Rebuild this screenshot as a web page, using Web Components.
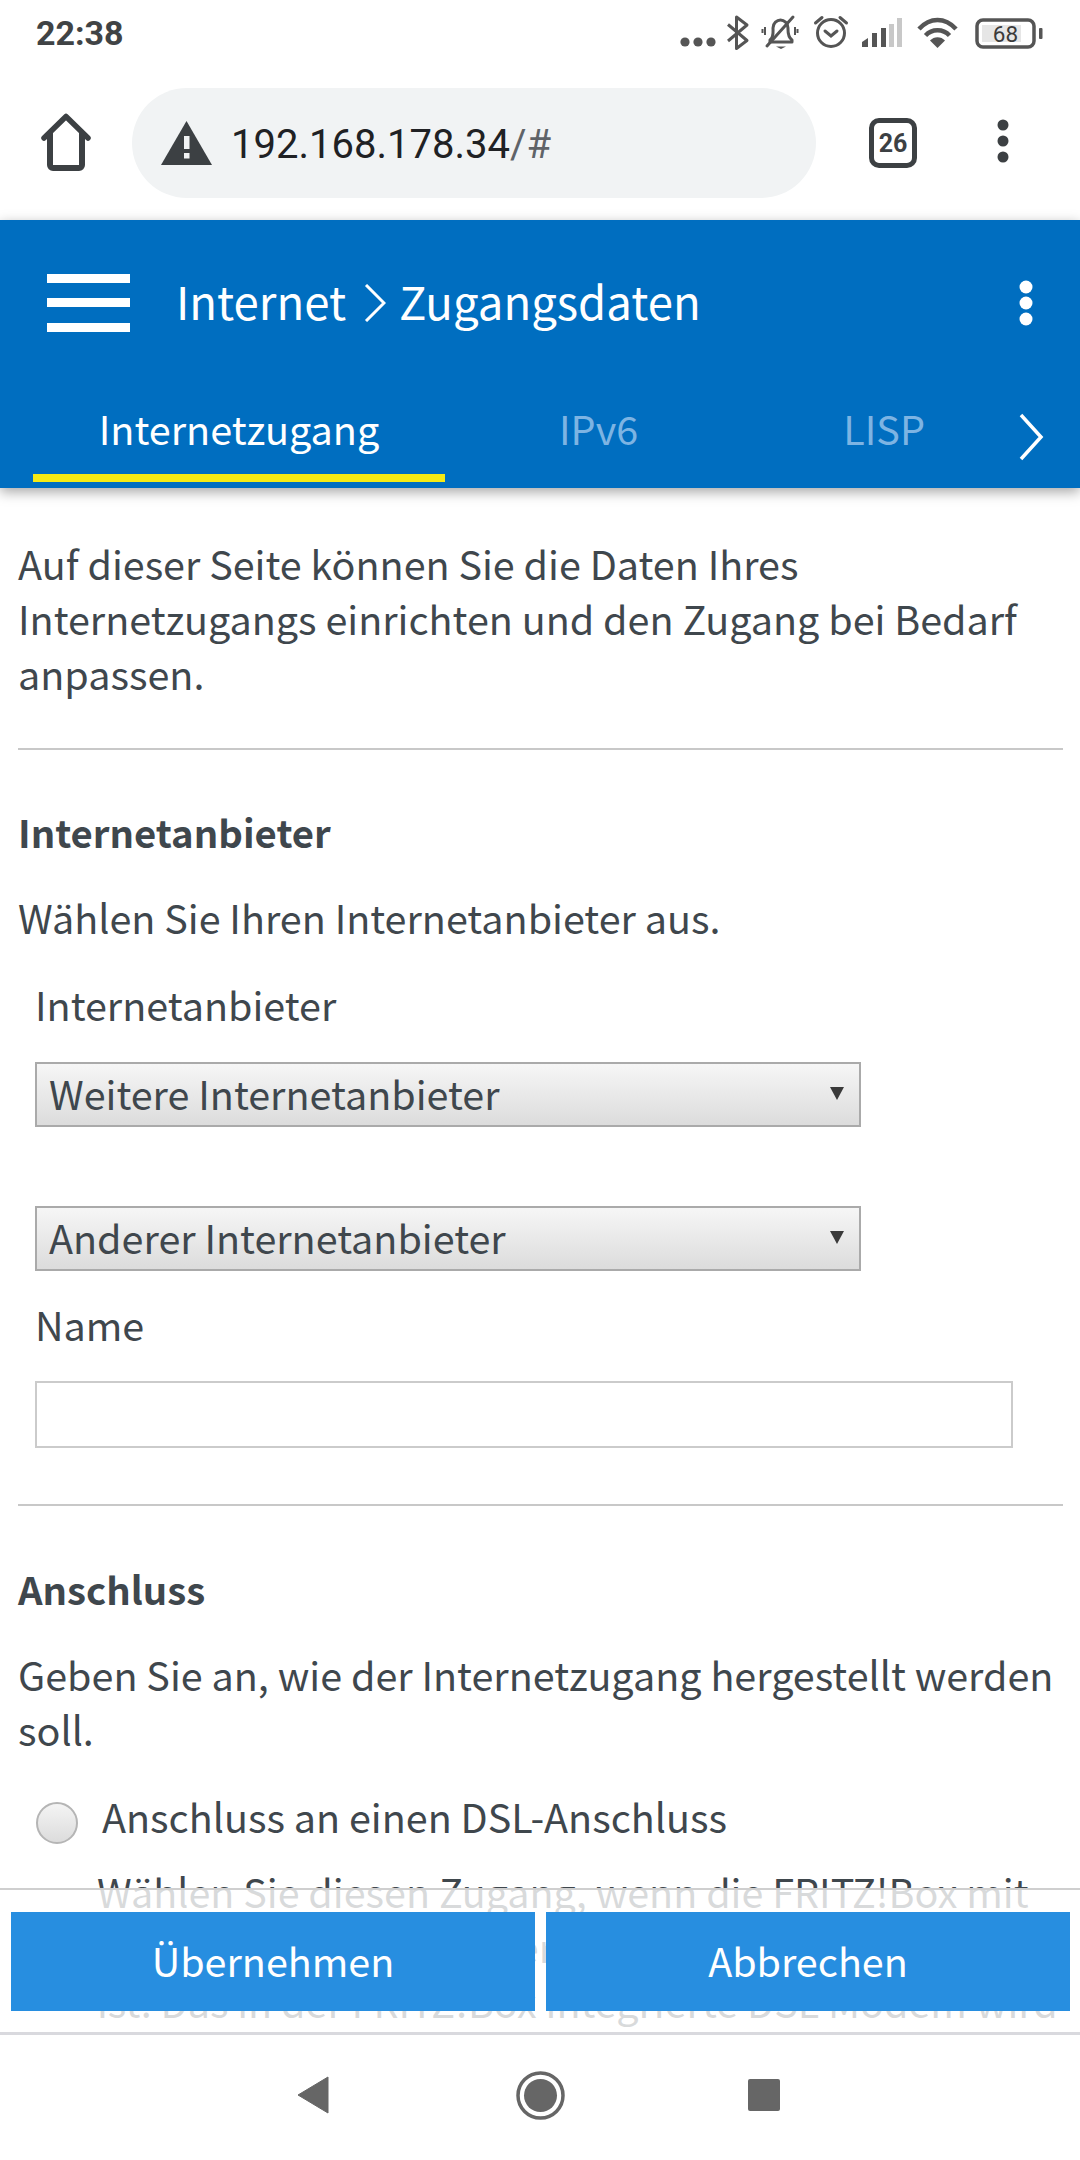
<!DOCTYPE html>
<html lang="de"><head><meta charset="utf-8"><title>Internet</title>
<style>
html,body{margin:0;padding:0;background:#fff}
body{width:1080px;height:2160px;overflow:hidden;font-family:"Noto Sans CJK SC","Noto Sans CJK JP","Open Sans",sans-serif;color:#3f474d}
</style></head><body>
<phone-app>
<status-bar slot="status"></status-bar>
<browser-bar slot="browser" url="192.168.178.34" rest="/#" tabs="26"></browser-bar>
<app-header slot="header" area="Internet" page="Zugangsdaten">
  <header-tab active>Internetzugang</header-tab>
  <header-tab class="b">IPv6</header-tab>
  <header-tab class="c">LISP</header-tab>
</app-header>
<page-body slot="main">
  <page-text>Auf dieser Seite können Sie die Daten Ihres Internetzugangs einrichten und den Zugang bei Bedarf anpassen.</page-text>
  <page-section heading="Internetanbieter" style="--gap:48px;--head:54px">
    <page-text>Wählen Sie Ihren Internetanbieter aus.</page-text>
    <field-label>Internetanbieter</field-label>
    <fake-select>Weitere Internetanbieter</fake-select>
    <fake-select second>Anderer Internetanbieter</fake-select>
    <field-label name>Name</field-label>
    <fake-input></fake-input>
  </page-section>
  <page-section heading="Anschluss" style="--gap:56px;--head:55px">
    <page-text>Geben Sie an, wie der Internetzugang hergestellt werden soll.</page-text>
    <radio-option>Anschluss an einen DSL-Anschluss</radio-option>
    <option-hint>Wählen Sie diesen Zugang, wenn die FRITZ!Box mit<br>einem DSL-Anschluss verbunden<br>ist. Das in der FRITZ!Box integrierte DSL Modem wird</option-hint>
  </page-section>
</page-body>
<action-bar slot="actions"><action-button>Übernehmen</action-button><action-button>Abbrechen</action-button></action-bar>
<nav-bar slot="nav"></nav-bar>
</phone-app>
<script>
function def(name, css, html){
  customElements.define(name, class extends HTMLElement{
    connectedCallback(){
      if(this.shadowRoot) return;
      const r=this.attachShadow({mode:'open'});
      const h=typeof html==='function'?html(this):html;
      r.innerHTML='<style>'+css+'</style>'+h;
    }
  });
}
def('phone-app',`:host{display:flex;flex-direction:column;width:1080px;height:2160px;position:relative;overflow:hidden;background:#fff}
.main{flex:1;min-height:0;position:relative;overflow:hidden}
.top{position:relative;z-index:2}`,
`<slot name="status"></slot><slot name="browser"></slot><div class="top"><slot name="header"></slot></div>
<div class="main"><slot name="main"></slot><slot name="actions"></slot></div><slot name="nav"></slot>`);

def('status-bar',`:host{display:flex;align-items:center;height:66px;padding:0 36px;box-sizing:border-box;position:relative}
.t{font:700 34px/66px Roboto,sans-serif;color:#404345;margin-top:-1px}
svg{position:absolute;left:0;top:0}
.b{position:absolute;left:976px;width:59px;top:21px;text-align:center;font:400 22.5px/27px Roboto,sans-serif;color:#3a3a3a}`,
`<span class="t">22:38</span>
<svg width="1080" height="66" viewBox="0 0 1080 66" aria-hidden="true">
<g fill="#555"><circle cx="685" cy="42" r="4.6"/><circle cx="698" cy="42" r="4.6"/><circle cx="711" cy="42" r="4.6"/></g>
<path d="M728 24.500 L747 40.500 L736.500 48.500 V17 L747 25 L728 41" fill="none" stroke="#555" stroke-width="3" stroke-linejoin="round"/>
<g fill="none" stroke="#555" stroke-width="3">
<path d="M770 40 c4-3 3-8 3-12 c0-5 4-8 7.500-8 c3.500 0 7.500 3 7.500 8 c0 4-.5 9 4 12 v2 h-22 z" stroke-linejoin="round"/>
<path d="M767 46 L793 17" stroke-linecap="round"/>
<path d="M765 27 v8 M762.500 29 v4 M795 27 v8 M797.500 29 v4" stroke-width="2"/>
</g>
<path d="M776 46.500 h10 l-5 2.500z" fill="#555"/>
<g fill="none" stroke="#555" stroke-width="3" stroke-linecap="round">
<circle cx="831" cy="33" r="13.500"/><path d="M825 31 l6 5 l6-5"/><path d="M815.500 23 L822 17.500 M840 17.500 L846.500 23"/>
</g>
<g fill="#555"><path d="M862 42 l6-4 v9 h-6z"/><rect x="872" y="33" width="5" height="14"/><rect x="881" y="28" width="5" height="19"/></g>
<g fill="#c8c8c8"><rect x="889" y="24" width="5" height="23"/><rect x="897" y="18" width="5" height="29"/></g>
<g fill="none" stroke="#555" stroke-width="4.500">
<path d="M919 29 C930 17 945 17 956 29"/><path d="M925.500 35.500 C932 28.500 943 28.500 949.500 35.500"/></g>
<path d="M930 40.500 C934 36 941 36 945 40.500 L937.500 48z" fill="#555"/>
<rect x="977" y="20" width="57" height="27" rx="6" fill="none" stroke="#555" stroke-width="3.500"/>
<rect x="982" y="25" width="39" height="17" fill="#e6e6e6"/>
<rect x="1039" y="28" width="3.500" height="11" rx="1" fill="#555"/>
</svg><span class="b">68</span>`);

def('browser-bar',`:host{display:flex;align-items:center;height:154px;box-sizing:border-box}
.home{width:132px;height:60px;flex:none;display:flex}
.pill{flex:none;width:684px;height:110px;border-radius:55px;background:#f1f3f4;display:flex;align-items:center;box-sizing:border-box;padding-left:29px}
.url{font:400 40px/1 Roboto,sans-serif;color:#202124;margin:3px 0 0 19px}
.url span{color:#5f6368}
.tab{width:48px;height:50px;box-sizing:border-box;border:5px solid #3c4043;border-radius:10px;display:flex;align-items:center;justify-content:center;font:700 25px/1 Roboto,sans-serif;color:#3c4043}
svg{display:block}`,
h=>`<div class="home"><svg width="132" height="60" viewBox="0 0 132 60" aria-hidden="true"><path d="M44 25 L66 3.500 L88 25" fill="none" stroke="#3c4043" stroke-width="5.500" stroke-linecap="round" stroke-linejoin="round"/><path d="M50 20 V52 a3 3 0 0 0 3 3 H79 a3 3 0 0 0 3-3 V20" fill="none" stroke="#3c4043" stroke-width="6"/></svg></div>
<div class="pill"><svg width="51" height="44" viewBox="0 0 51 44" aria-hidden="true"><path d="M25.500 0 L51 44 H0z" fill="#3c4043"/><rect x="23" y="15" width="5.500" height="13" fill="#f1f3f4"/><rect x="23" y="32" width="5.500" height="5.500" fill="#f1f3f4"/></svg>
<div class="url">${h.getAttribute('url')}<span>${h.getAttribute('rest')}</span></div></div>
<div class="tab" style="margin-left:53px">${h.getAttribute('tabs')}</div>
<svg style="margin-left:70px" width="32" height="50" viewBox="0 0 32 50" aria-hidden="true"><g fill="#3c4043"><circle cx="16" cy="7" r="5.500"/><circle cx="16" cy="23" r="5.500"/><circle cx="16" cy="39" r="5.500"/></g></svg>`);

def('app-header',`:host{display:block;height:268px;background:#006ec0;color:#fff;box-shadow:0 4px 12px rgba(0,0,0,.35);position:relative;font-size:45.5px}
.row{display:flex;align-items:center;height:165px;padding-left:47px;box-sizing:border-box}
.burger{width:83px;height:58px;flex:none;display:flex;flex-direction:column;justify-content:space-between;margin-right:46px}
.burger i{display:block;height:9px;background:#fff}
.title{flex:1;display:flex;align-items:center;line-height:60px}
.title span{margin-bottom:6px}
.title svg{margin:0 13px 0 18px}
.kebab{margin-right:46px}
.tabs{height:103px;padding:13px 0 0 33px;box-sizing:border-box;position:relative;display:flex}
.next{position:absolute;left:1018px;top:28px}`,
h=>`<div class="row"><div class="burger"><i></i><i></i><i></i></div>
<div class="title"><span>${h.getAttribute('area')}</span><svg width="22" height="38" viewBox="0 0 22 38" aria-hidden="true"><path d="M2 1 L20 19 L2 37" fill="none" stroke="#fff" stroke-width="3"/></svg><span>${h.getAttribute('page')}</span></div>
<svg class="kebab" width="16" height="46" viewBox="0 0 16 46" aria-hidden="true"><g fill="#fff"><circle cx="8" cy="7" r="6.500"/><circle cx="8" cy="23" r="6.500"/><circle cx="8" cy="39" r="6.500"/></g></svg></div>
<div class="tabs"><slot></slot><svg class="next" width="26" height="48" viewBox="0 0 26 48" aria-hidden="true"><path d="M3 2 L23 24 L3 46" fill="none" stroke="#fff" stroke-width="3.500"/></svg></div>`);

def('header-tab',`:host{display:block;font-size:39.6px;line-height:60px;color:#7db4e3;text-align:center;white-space:nowrap}
:host([active]){color:#fff;width:412px;height:84px;box-sizing:border-box;border-bottom:8px solid #f5ea14}
:host(.b){margin-left:114px}
:host(.c){margin-left:205px}`,`<slot></slot>`);

def('page-body',`:host{display:block;padding:47px 17px 0 18px;box-sizing:border-box;height:1600px;font-size:39.5px;line-height:55px}`,`<slot></slot>`);
def('page-text',`:host{display:block;line-height:55px}`,`<slot></slot>`);
def('page-section',`:host{display:block;margin-top:var(--gap);border-top:2px solid #c8c8c8}
h3{margin:var(--head) 0 30px;font-size:38.3px;line-height:55px;font-weight:700}`,
h=>`<h3>${h.getAttribute('heading')}</h3><slot></slot>`);
def('field-label',`:host{display:block;margin:32px 0 31px 17px;line-height:55px}
:host([name]){margin-top:25px;margin-bottom:30px}`,`<slot></slot>`);
def('fake-select',`:host{display:flex;align-items:center;justify-content:space-between;box-sizing:border-box;margin-left:17px;width:826px;height:65px;border:2px solid #aaa;padding:0 15px 3px 12px;background:linear-gradient(#f6f6f6,#dcdcdc);line-height:60px}
:host([second]){margin-top:79px}
i{width:0;height:0;border-left:7px solid transparent;border-right:7px solid transparent;border-top:13px solid #3a3a3a}`,`<span><slot></slot></span><i></i>`);
def('fake-input',`:host{display:block;box-sizing:border-box;margin-left:17px;width:978px;height:67px;border:2px solid #cbcbcb;background:#fff}`,``);
def('radio-option',`:host{display:flex;align-items:center;margin:32px 0 0 18px;line-height:55px;height:55px}
i{width:42px;height:42px;box-sizing:border-box;border-radius:50%;border:2px solid #b5b5b5;background:linear-gradient(#f4f4f4,#dcdcdc);margin-right:24px;margin-top:14px;flex:none}`,`<i></i><slot></slot>`);
def('option-hint',`:host{display:block;margin:20px 0 0 79px;line-height:55px;white-space:nowrap}`,`<slot></slot>`);
def('action-bar',`:host{position:absolute;left:0;right:0;bottom:0;height:144px;box-sizing:border-box;display:flex;gap:11px;padding:22px 10px 21px 11px;background:rgba(255,255,255,.8);border-top:2px solid #cfcfcf}`,`<slot></slot>`);
def('action-button',`:host{flex:1;display:flex;align-items:center;justify-content:center;background:#278ee0;color:#fff;font-size:39.5px;padding-bottom:5px;box-sizing:border-box}`,`<slot></slot>`);
def('nav-bar',`:host{display:block;height:128px;background:#fff;border-top:3px solid #d9d9de;box-sizing:border-box}svg{display:block}`,
`<svg width="1080" height="125" viewBox="0 2035 1080 125" aria-hidden="true"><path d="M328 2077 V2113 L298 2095 z" fill="#666" stroke="#666" stroke-width="1" stroke-linejoin="round"/>
<circle cx="540.500" cy="2095.500" r="22.500" fill="none" stroke="#666" stroke-width="3.500"/><circle cx="540.500" cy="2095.500" r="16.500" fill="#666"/>
<rect x="748" y="2079" width="32" height="32" rx="2" fill="#666"/></svg>`);
</script>
</body></html>
